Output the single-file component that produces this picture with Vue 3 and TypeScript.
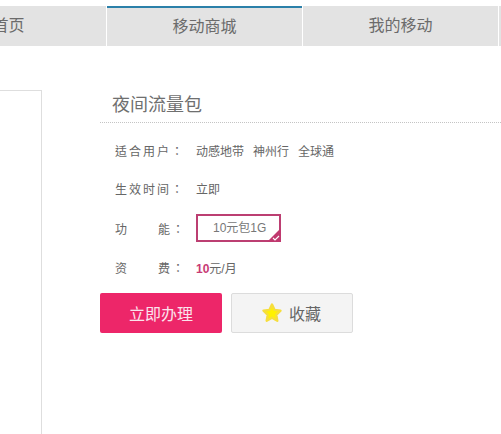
<script setup lang="ts">
const tabs = [
  { name: '首页', active: false },
  { name: '移动商城', active: true },
  { name: '我的移动', active: false },
  { name: '', active: false },
]
</script>

<template>
  <div class="page">
    <nav class="nav">
      <div v-for="(t, i) in tabs" :key="i" class="tab" :class="{ active: t.active }">{{ t.name }}</div>
    </nav>
    <main class="main">
      <div class="preview"></div>
      <section class="detail">
        <h1 class="title">夜间流量包</h1>
        <div class="rows">
          <div class="row r1">
            <span class="label">适合用户：</span>
            <span class="value users"><span>动感地带</span><span>神州行</span><span>全球通</span></span>
          </div>
          <div class="row r2">
            <span class="label">生效时间：</span>
            <span class="value">立即</span>
          </div>
          <div class="row r3">
            <span class="label split"><span>功</span><span>能：</span></span>
            <span class="option">
              10元包1G
              <svg class="corner" width="14" height="14" viewBox="0 0 14 14">
                <path d="M14 0V14H0Z" fill="#c0396f" />
                <path d="M6 10l2 2 4-4" fill="none" stroke="#fff" stroke-width="1.1" />
              </svg>
            </span>
          </div>
          <div class="row r4">
            <span class="label split"><span>资</span><span>费：</span></span>
            <span class="value"><b class="price">10</b>元/月</span>
          </div>
        </div>
        <div class="actions">
          <button class="btn primary" type="button">立即办理</button>
          <button class="btn fav" type="button">
            <svg width="22" height="22" viewBox="0 0 22 22">
              <path
                d="M11 2.500l2.600 5.400 5.900.8-4.300 4.100 1.100 5.900-5.300-2.900-5.300 2.900 1.100-5.900-4.300-4.100 5.900-.8z"
                fill="#fff200"
                stroke="#f6de3c"
                stroke-width="2.400"
                stroke-linejoin="round"
              />
            </svg>
            <span>收藏</span>
          </button>
        </div>
      </section>
    </main>
  </div>
</template>

<style>
html,
body {
  margin: 0;
  background: #fff;
}
</style>

<style scoped>
.page {
  width: 501px;
  height: 434px;
  overflow: hidden;
  background: #fff;
  font-family: "Liberation Sans", "Noto Sans CJK SC", sans-serif;
  color: #666;
}
.nav {
  display: flex;
  gap: 1px;
  margin: 6px 0 0 -89px;
  width: 700px;
  height: 40px;
}
.tab {
  flex: 0 0 195px;
  box-sizing: border-box;
  height: 40px;
  line-height: 40px;
  text-align: center;
  background: #e3e3e3;
  font-size: 16px;
  color: #6b6b6b;
}
.tab.active {
  border-top: 2px solid #2b80a9;
  line-height: 38px;
}
.main {
  display: flex;
  align-items: flex-start;
  margin-top: 44px;
}
.preview {
  flex: 0 0 auto;
  box-sizing: border-box;
  width: 42px;
  height: 344px;
  border: 1px solid #dedede;
  border-left: none;
  border-bottom: none;
}
.detail {
  flex: 1;
  margin-left: 58px;
}
.title {
  margin: 0;
  box-sizing: border-box;
  height: 33px;
  padding-left: 12px;
  border-bottom: 1px dotted #c4c4c4;
  font-size: 18px;
  font-weight: normal;
  line-height: 30px;
  color: #6f6f6f;
}
.rows {
  padding-left: 15px;
}
.row {
  display: flex;
  align-items: center;
  font-size: 12px;
  height: 20px;
}
.r1 {
  margin-top: 17px;
}
.r2 {
  margin-top: 18px;
}
.r3 {
  margin-top: 16px;
  height: 28px;
}
.r4 {
  margin-top: 15px;
}
.label {
  flex: 0 0 81px;
  letter-spacing: 2px;
  color: #666;
  font-family: "Liberation Sans", "Noto Sans CJK TC", sans-serif;
}
.label.split {
  display: flex;
  gap: 29px;
}
.users {
  display: flex;
  gap: 9px;
}
.option {
  position: relative;
  box-sizing: border-box;
  width: 85px;
  height: 28px;
  line-height: 24px;
  padding-left: 15px;
  border: 2px solid #bc3f72;
  color: #777;
}
.corner {
  position: absolute;
  right: -2px;
  bottom: -2px;
}
.price {
  color: #c83a75;
}
.actions {
  display: flex;
  gap: 9px;
  margin-top: 16px;
}
.btn {
  width: 122px;
  height: 40px;
  box-sizing: border-box;
  border-radius: 2px;
  font-family: inherit;
  font-size: 16px;
  padding: 0;
}
.primary {
  border: none;
  background: #ed2669;
  color: #fbe3ec;
}
.fav {
  display: flex;
  align-items: center;
  justify-content: center;
  gap: 6px;
  padding-right: 2px;
  border: 1px solid #dcdcdc;
  background: #f4f4f4;
  color: #666;
}
</style>
